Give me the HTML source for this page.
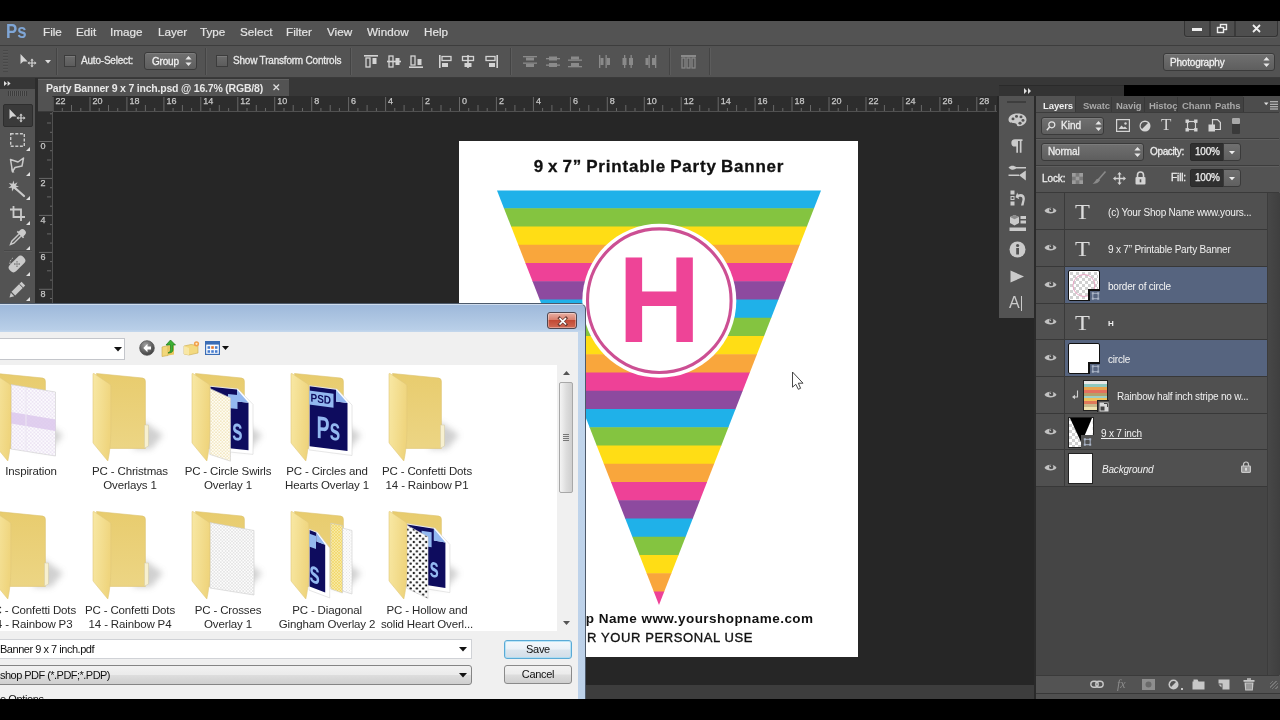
<!DOCTYPE html><html lang="en"><head><meta charset="utf-8"><title>Photoshop - Save As</title><style>
*{box-sizing:border-box;margin:0;padding:0}
html,body{width:1280px;height:720px;overflow:hidden;background:#000}
body{position:relative;font-family:"Liberation Sans",sans-serif;font-size:12px;color:#ddd}
.a{position:absolute}
.t{position:absolute;white-space:nowrap;line-height:1}
svg{position:absolute;overflow:visible}
#root{position:absolute;left:0;top:0;width:1280px;height:720px;overflow:hidden;will-change:transform}
</style></head><body><div id="root"><div class="a" style="left:0px;top:21px;width:1280px;height:678px;background:#262626;"></div><div class="a" style="left:0px;top:21px;width:1280px;height:25px;background:#535353;"></div><div class="t" style="left:6px;top:22px;font-size:19.5px;color:#7fa6d6;font-weight:bold;transform:scaleX(0.86);transform-origin:0 0">Ps</div><div class="t" style="left:43px;top:26px;font-size:11.7px;color:#e4e4e4;-webkit-text-stroke:0.2px #e4e4e4">File</div><div class="t" style="left:76px;top:26px;font-size:11.7px;color:#e4e4e4;-webkit-text-stroke:0.2px #e4e4e4">Edit</div><div class="t" style="left:110px;top:26px;font-size:11.7px;color:#e4e4e4;-webkit-text-stroke:0.2px #e4e4e4">Image</div><div class="t" style="left:158px;top:26px;font-size:11.7px;color:#e4e4e4;-webkit-text-stroke:0.2px #e4e4e4">Layer</div><div class="t" style="left:200px;top:26px;font-size:11.7px;color:#e4e4e4;-webkit-text-stroke:0.2px #e4e4e4">Type</div><div class="t" style="left:240px;top:26px;font-size:11.7px;color:#e4e4e4;-webkit-text-stroke:0.2px #e4e4e4">Select</div><div class="t" style="left:286px;top:26px;font-size:11.7px;color:#e4e4e4;-webkit-text-stroke:0.2px #e4e4e4">Filter</div><div class="t" style="left:327px;top:26px;font-size:11.7px;color:#e4e4e4;-webkit-text-stroke:0.2px #e4e4e4">View</div><div class="t" style="left:367px;top:26px;font-size:11.7px;color:#e4e4e4;-webkit-text-stroke:0.2px #e4e4e4">Window</div><div class="t" style="left:424px;top:26px;font-size:11.7px;color:#e4e4e4;-webkit-text-stroke:0.2px #e4e4e4">Help</div><div class="a" style="left:1184px;top:21px;width:94px;height:16px;background:#4e4e4e;border:1px solid #343434;border-top:none;border-radius:0 0 3px 3px;box-shadow:0 1px 0 #5e5e5e"></div><div class="a" style="left:1209px;top:21px;width:2px;height:15px;background:#3a3a3a;"></div><div class="a" style="left:1234px;top:21px;width:2px;height:15px;background:#3a3a3a;"></div><div class="a" style="left:1192px;top:28px;width:10px;height:3px;background:#eee;"></div><svg style="left:1216px;top:23px" width="14" height="11"><rect x="4.5" y="1.5" width="6" height="5" fill="none" stroke="#eee" stroke-width="1.4"/><rect x="1.5" y="4.5" width="6" height="5" fill="#4e4e4e" stroke="#eee" stroke-width="1.4"/></svg><svg style="left:1252px;top:24px" width="10" height="9"><path d="M1 1L8 8M8 1L1 8" stroke="#eee" stroke-width="1.8"/></svg><div class="a" style="left:0px;top:45px;width:1280px;height:1px;background:#3d3d3d;"></div><div class="a" style="left:0px;top:46px;width:1280px;height:31px;background:#535353;"></div><div class="a" style="left:0px;top:77px;width:1280px;height:1px;background:#3a3a3a;"></div>
<div class="a" style="left:3px;top:50px;width:5px;height:22px;background:repeating-linear-gradient(#484848 0 1px,#585858 1px 2px,#535353 2px 3px);"></div><svg style="left:20px;top:54px" width="18" height="14"><path d="M0.5 0L0.5 10L3.2 7.6L7.6 7.4Z" fill="#d6d6d6"/><path d="M12 4.5L10.3 6.5H11.4V8.4H9.5V7.3L7.5 9L9.5 10.7V9.6H11.4V11.5H10.3L12 13.5L13.7 11.5H12.6V9.6H14.5V10.7L16.5 9L14.5 7.3V8.4H12.6V6.5H13.7Z" fill="#d6d6d6"/></svg><svg style="left:45px;top:60px" width="6" height="4"><path d="M0 0H6L3 3.5Z" fill="#ddd"/></svg><div class="a" style="left:56px;top:48px;width:1px;height:27px;background:#444;"></div><div class="a" style="left:57px;top:48px;width:1px;height:27px;background:#5c5c5c;"></div><div class="a" style="left:64px;top:55px;width:12px;height:12px;background:linear-gradient(#6b6b6b,#5c5c5c);border:1px solid #3c3c3c;box-shadow:inset 0 1px 0 #7a7a7a"></div><div class="t" style="left:81px;top:56px;font-size:10px;color:#e8e8e8;-webkit-text-stroke:0.3px #e8e8e8;letter-spacing:-0.2px">Auto-Select:</div><div class="a" style="left:144px;top:52px;width:53px;height:18px;background:linear-gradient(#707070,#5e5e5e);border:1px solid #3a3a3a;border-radius:3px;box-shadow:inset 0 1px 0 #7c7c7c"></div><div class="t" style="left:152px;top:57px;font-size:10px;color:#f0f0f0;-webkit-text-stroke:0.3px #f0f0f0;letter-spacing:-0.2px">Group</div><svg style="left:185px;top:56px" width="7" height="10"><path d="M3.5 0L6.6 3.6H0.4Z M3.5 10L6.6 6.4H0.4Z" fill="#e6e6e6"/></svg><div class="a" style="left:205px;top:48px;width:1px;height:27px;background:#444;"></div><div class="a" style="left:206px;top:48px;width:1px;height:27px;background:#5c5c5c;"></div><div class="a" style="left:216px;top:55px;width:12px;height:12px;background:linear-gradient(#6b6b6b,#5c5c5c);border:1px solid #3c3c3c;box-shadow:inset 0 1px 0 #7a7a7a"></div><div class="t" style="left:233px;top:56px;font-size:10px;color:#e8e8e8;-webkit-text-stroke:0.3px #e8e8e8;letter-spacing:-0.2px">Show Transform Controls</div><div class="a" style="left:350px;top:48px;width:1px;height:27px;background:#444;"></div><div class="a" style="left:351px;top:48px;width:1px;height:27px;background:#5c5c5c;"></div><svg style="left:364px;top:55px" width="15" height="14"><rect x="0" y="0" width="14" height="1.6" fill="#d4d4d4"/><rect x="2" y="3" width="4" height="9" fill="none" stroke="#d4d4d4" stroke-width="1.3"/><rect x="8.5" y="3" width="4" height="6" fill="#d4d4d4"/></svg><svg style="left:387px;top:55px" width="15" height="14"><rect x="0" y="5.7" width="14" height="1.6" fill="#d4d4d4"/><rect x="2" y="1" width="4" height="11" fill="none" stroke="#d4d4d4" stroke-width="1.3"/><rect x="8.5" y="3" width="4" height="7" fill="#d4d4d4"/></svg><svg style="left:409px;top:55px" width="15" height="14"><rect x="0" y="11.4" width="14" height="1.6" fill="#d4d4d4"/><rect x="2" y="1" width="4" height="9" fill="none" stroke="#d4d4d4" stroke-width="1.3"/><rect x="8.5" y="4" width="4" height="6" fill="#d4d4d4"/></svg><svg style="left:439px;top:55px" width="15" height="14"><rect x="0" y="0" width="1.6" height="13" fill="#d4d4d4"/><rect x="3" y="1.5" width="9" height="4" fill="none" stroke="#d4d4d4" stroke-width="1.3"/><rect x="3" y="8" width="6" height="4" fill="#d4d4d4"/></svg><svg style="left:461px;top:55px" width="15" height="14"><rect x="6.2" y="0" width="1.6" height="13" fill="#d4d4d4"/><rect x="1.5" y="1.5" width="11" height="4" fill="none" stroke="#d4d4d4" stroke-width="1.3"/><rect x="3.5" y="8" width="7" height="4" fill="#d4d4d4"/></svg><svg style="left:484px;top:55px" width="15" height="14"><rect x="12.4" y="0" width="1.6" height="13" fill="#d4d4d4"/><rect x="2" y="1.5" width="9" height="4" fill="none" stroke="#d4d4d4" stroke-width="1.3"/><rect x="5" y="8" width="6" height="4" fill="#d4d4d4"/></svg><div class="a" style="left:510px;top:48px;width:1px;height:27px;background:#444;"></div><div class="a" style="left:511px;top:48px;width:1px;height:27px;background:#5c5c5c;"></div><svg style="left:523px;top:55px" width="15" height="14"><rect x="0" y="1" width="14" height="1.3" fill="#8a8a8a"/><rect x="3" y="2.5" width="8" height="3" fill="#8a8a8a"/><rect x="0" y="7.5" width="14" height="1.3" fill="#8a8a8a"/><rect x="3" y="9" width="8" height="3" fill="#8a8a8a"/></svg><svg style="left:546px;top:55px" width="15" height="14"><rect x="0" y="3" width="14" height="1.3" fill="#8a8a8a"/><rect x="3" y="1.5" width="8" height="4" fill="#8a8a8a"/><rect x="0" y="9.5" width="14" height="1.3" fill="#8a8a8a"/><rect x="3" y="8" width="8" height="4" fill="#8a8a8a"/></svg><svg style="left:568px;top:55px" width="15" height="14"><rect x="0" y="4.5" width="14" height="1.3" fill="#8a8a8a"/><rect x="3" y="1.5" width="8" height="3" fill="#8a8a8a"/><rect x="0" y="11" width="14" height="1.3" fill="#8a8a8a"/><rect x="3" y="8" width="8" height="3" fill="#8a8a8a"/></svg><svg style="left:598px;top:55px" width="15" height="14"><rect x="1" y="0" width="1.3" height="13" fill="#8a8a8a"/><rect x="2.5" y="3" width="3" height="7" fill="#8a8a8a"/><rect x="7.5" y="0" width="1.3" height="13" fill="#8a8a8a"/><rect x="9" y="3" width="3" height="7" fill="#8a8a8a"/></svg><svg style="left:621px;top:55px" width="15" height="14"><rect x="3" y="0" width="1.3" height="13" fill="#8a8a8a"/><rect x="1.5" y="3" width="4" height="7" fill="#8a8a8a"/><rect x="9.5" y="0" width="1.3" height="13" fill="#8a8a8a"/><rect x="8" y="3" width="4" height="7" fill="#8a8a8a"/></svg><svg style="left:644px;top:55px" width="15" height="14"><rect x="4.5" y="0" width="1.3" height="13" fill="#8a8a8a"/><rect x="1.5" y="3" width="3" height="7" fill="#8a8a8a"/><rect x="11" y="0" width="1.3" height="13" fill="#8a8a8a"/><rect x="8" y="3" width="3" height="7" fill="#8a8a8a"/></svg><div class="a" style="left:669px;top:48px;width:1px;height:27px;background:#444;"></div><div class="a" style="left:670px;top:48px;width:1px;height:27px;background:#5c5c5c;"></div><svg style="left:681px;top:55px" width="15" height="14"><rect x="0" y="0" width="15" height="2" fill="#8a8a8a"/><rect x="1" y="3" width="3" height="10" fill="none" stroke="#8a8a8a" stroke-width="1.2"/><rect x="6" y="3" width="3" height="10" fill="none" stroke="#8a8a8a" stroke-width="1.2"/><rect x="11" y="3" width="3" height="10" fill="none" stroke="#8a8a8a" stroke-width="1.2"/></svg><div class="a" style="left:709px;top:48px;width:1px;height:27px;background:#444;"></div><div class="a" style="left:710px;top:48px;width:1px;height:27px;background:#5c5c5c;"></div><div class="a" style="left:1163px;top:53px;width:112px;height:18px;background:linear-gradient(#707070,#5e5e5e);border:1px solid #3a3a3a;border-radius:3px;box-shadow:inset 0 1px 0 #7c7c7c"></div><div class="t" style="left:1170px;top:58px;font-size:10px;color:#f0f0f0;-webkit-text-stroke:0.3px #f0f0f0;letter-spacing:-0.2px">Photography</div><svg style="left:1263px;top:57px" width="7" height="10"><path d="M3.5 0L6.6 3.6H0.4Z M3.5 10L6.6 6.4H0.4Z" fill="#e6e6e6"/></svg>
<div class="a" style="left:0px;top:78px;width:1280px;height:18px;background:#373737;"></div><div class="a" style="left:0px;top:78px;width:35px;height:11px;background:#363636;"></div><svg style="left:4px;top:81px" width="8" height="5"><path d="M0 0L3 2.5L0 5Z M3.6 0L6.6 2.5L3.6 5Z" fill="#e0e0e0"/></svg><div class="a" style="left:38px;top:79px;width:251px;height:17px;background:#535353;border-top:1px solid #616161"></div><div class="t" style="left:46px;top:83px;font-size:10.5px;color:#e8e8e8;font-weight:bold;letter-spacing:-0.2px">Party Banner 9 x 7 inch.psd @ 16.7% (RGB/8)</div><svg style="left:273px;top:84px" width="7" height="7"><path d="M0.5 0.5L6 6M6 0.5L0.5 6" stroke="#ddd" stroke-width="1.3"/></svg>
<div class="a" style="left:38px;top:96px;width:959px;height:16px;background:#2d2d2d;"></div><div class="a" style="left:38px;top:111px;width:959px;height:1px;background:#505050;"></div><div class="a" style="left:38px;top:112px;width:15px;height:587px;background:#2d2d2d;"></div><div class="a" style="left:52px;top:112px;width:1px;height:587px;background:#505050;"></div><div class="a" style="left:38px;top:96px;width:15px;height:16px;background:#525252;border-right:1px solid #3a3a3a;border-bottom:1px solid #3a3a3a"></div><svg style="left:0;top:0" width="1280" height="720"><rect x="52.5" y="97" width="1" height="14" fill="#686868"/><text x="55.5" y="104.3" font-size="9" fill="#c8c8c8" stroke="#c8c8c8" stroke-width="0.25" font-family="Liberation Sans, sans-serif">22</text><rect x="61.8" y="108" width="1" height="3" fill="#686868"/><rect x="71.0" y="105" width="1" height="6" fill="#686868"/><rect x="80.3" y="108" width="1" height="3" fill="#686868"/><rect x="89.5" y="97" width="1" height="14" fill="#686868"/><text x="92.5" y="104.3" font-size="9" fill="#c8c8c8" stroke="#c8c8c8" stroke-width="0.25" font-family="Liberation Sans, sans-serif">20</text><rect x="98.7" y="108" width="1" height="3" fill="#686868"/><rect x="108.0" y="105" width="1" height="6" fill="#686868"/><rect x="117.2" y="108" width="1" height="3" fill="#686868"/><rect x="126.4" y="97" width="1" height="14" fill="#686868"/><text x="129.4" y="104.3" font-size="9" fill="#c8c8c8" stroke="#c8c8c8" stroke-width="0.25" font-family="Liberation Sans, sans-serif">18</text><rect x="135.7" y="108" width="1" height="3" fill="#686868"/><rect x="144.9" y="105" width="1" height="6" fill="#686868"/><rect x="154.2" y="108" width="1" height="3" fill="#686868"/><rect x="163.4" y="97" width="1" height="14" fill="#686868"/><text x="166.4" y="104.3" font-size="9" fill="#c8c8c8" stroke="#c8c8c8" stroke-width="0.25" font-family="Liberation Sans, sans-serif">16</text><rect x="172.6" y="108" width="1" height="3" fill="#686868"/><rect x="181.9" y="105" width="1" height="6" fill="#686868"/><rect x="191.1" y="108" width="1" height="3" fill="#686868"/><rect x="200.3" y="97" width="1" height="14" fill="#686868"/><text x="203.3" y="104.3" font-size="9" fill="#c8c8c8" stroke="#c8c8c8" stroke-width="0.25" font-family="Liberation Sans, sans-serif">14</text><rect x="209.6" y="108" width="1" height="3" fill="#686868"/><rect x="218.8" y="105" width="1" height="6" fill="#686868"/><rect x="228.1" y="108" width="1" height="3" fill="#686868"/><rect x="237.3" y="97" width="1" height="14" fill="#686868"/><text x="240.3" y="104.3" font-size="9" fill="#c8c8c8" stroke="#c8c8c8" stroke-width="0.25" font-family="Liberation Sans, sans-serif">12</text><rect x="246.5" y="108" width="1" height="3" fill="#686868"/><rect x="255.8" y="105" width="1" height="6" fill="#686868"/><rect x="265.0" y="108" width="1" height="3" fill="#686868"/><rect x="274.2" y="97" width="1" height="14" fill="#686868"/><text x="277.2" y="104.3" font-size="9" fill="#c8c8c8" stroke="#c8c8c8" stroke-width="0.25" font-family="Liberation Sans, sans-serif">10</text><rect x="283.5" y="108" width="1" height="3" fill="#686868"/><rect x="292.7" y="105" width="1" height="6" fill="#686868"/><rect x="302.0" y="108" width="1" height="3" fill="#686868"/><rect x="311.2" y="97" width="1" height="14" fill="#686868"/><text x="314.2" y="104.3" font-size="9" fill="#c8c8c8" stroke="#c8c8c8" stroke-width="0.25" font-family="Liberation Sans, sans-serif">8</text><rect x="320.4" y="108" width="1" height="3" fill="#686868"/><rect x="329.7" y="105" width="1" height="6" fill="#686868"/><rect x="338.9" y="108" width="1" height="3" fill="#686868"/><rect x="348.1" y="97" width="1" height="14" fill="#686868"/><text x="351.1" y="104.3" font-size="9" fill="#c8c8c8" stroke="#c8c8c8" stroke-width="0.25" font-family="Liberation Sans, sans-serif">6</text><rect x="357.4" y="108" width="1" height="3" fill="#686868"/><rect x="366.6" y="105" width="1" height="6" fill="#686868"/><rect x="375.9" y="108" width="1" height="3" fill="#686868"/><rect x="385.1" y="97" width="1" height="14" fill="#686868"/><text x="388.1" y="104.3" font-size="9" fill="#c8c8c8" stroke="#c8c8c8" stroke-width="0.25" font-family="Liberation Sans, sans-serif">4</text><rect x="394.3" y="108" width="1" height="3" fill="#686868"/><rect x="403.6" y="105" width="1" height="6" fill="#686868"/><rect x="412.8" y="108" width="1" height="3" fill="#686868"/><rect x="422.1" y="97" width="1" height="14" fill="#686868"/><text x="425.1" y="104.3" font-size="9" fill="#c8c8c8" stroke="#c8c8c8" stroke-width="0.25" font-family="Liberation Sans, sans-serif">2</text><rect x="431.3" y="108" width="1" height="3" fill="#686868"/><rect x="440.5" y="105" width="1" height="6" fill="#686868"/><rect x="449.8" y="108" width="1" height="3" fill="#686868"/><rect x="459.0" y="97" width="1" height="14" fill="#686868"/><text x="462.0" y="104.3" font-size="9" fill="#c8c8c8" stroke="#c8c8c8" stroke-width="0.25" font-family="Liberation Sans, sans-serif">0</text><rect x="468.2" y="108" width="1" height="3" fill="#686868"/><rect x="477.5" y="105" width="1" height="6" fill="#686868"/><rect x="486.7" y="108" width="1" height="3" fill="#686868"/><rect x="495.9" y="97" width="1" height="14" fill="#686868"/><text x="498.9" y="104.3" font-size="9" fill="#c8c8c8" stroke="#c8c8c8" stroke-width="0.25" font-family="Liberation Sans, sans-serif">2</text><rect x="505.2" y="108" width="1" height="3" fill="#686868"/><rect x="514.4" y="105" width="1" height="6" fill="#686868"/><rect x="523.7" y="108" width="1" height="3" fill="#686868"/><rect x="532.9" y="97" width="1" height="14" fill="#686868"/><text x="535.9" y="104.3" font-size="9" fill="#c8c8c8" stroke="#c8c8c8" stroke-width="0.25" font-family="Liberation Sans, sans-serif">4</text><rect x="542.1" y="108" width="1" height="3" fill="#686868"/><rect x="551.4" y="105" width="1" height="6" fill="#686868"/><rect x="560.6" y="108" width="1" height="3" fill="#686868"/><rect x="569.9" y="97" width="1" height="14" fill="#686868"/><text x="572.9" y="104.3" font-size="9" fill="#c8c8c8" stroke="#c8c8c8" stroke-width="0.25" font-family="Liberation Sans, sans-serif">6</text><rect x="579.1" y="108" width="1" height="3" fill="#686868"/><rect x="588.3" y="105" width="1" height="6" fill="#686868"/><rect x="597.6" y="108" width="1" height="3" fill="#686868"/><rect x="606.8" y="97" width="1" height="14" fill="#686868"/><text x="609.8" y="104.3" font-size="9" fill="#c8c8c8" stroke="#c8c8c8" stroke-width="0.25" font-family="Liberation Sans, sans-serif">8</text><rect x="616.0" y="108" width="1" height="3" fill="#686868"/><rect x="625.3" y="105" width="1" height="6" fill="#686868"/><rect x="634.5" y="108" width="1" height="3" fill="#686868"/><rect x="643.8" y="97" width="1" height="14" fill="#686868"/><text x="646.8" y="104.3" font-size="9" fill="#c8c8c8" stroke="#c8c8c8" stroke-width="0.25" font-family="Liberation Sans, sans-serif">10</text><rect x="653.0" y="108" width="1" height="3" fill="#686868"/><rect x="662.2" y="105" width="1" height="6" fill="#686868"/><rect x="671.5" y="108" width="1" height="3" fill="#686868"/><rect x="680.7" y="97" width="1" height="14" fill="#686868"/><text x="683.7" y="104.3" font-size="9" fill="#c8c8c8" stroke="#c8c8c8" stroke-width="0.25" font-family="Liberation Sans, sans-serif">12</text><rect x="689.9" y="108" width="1" height="3" fill="#686868"/><rect x="699.2" y="105" width="1" height="6" fill="#686868"/><rect x="708.4" y="108" width="1" height="3" fill="#686868"/><rect x="717.7" y="97" width="1" height="14" fill="#686868"/><text x="720.7" y="104.3" font-size="9" fill="#c8c8c8" stroke="#c8c8c8" stroke-width="0.25" font-family="Liberation Sans, sans-serif">14</text><rect x="726.9" y="108" width="1" height="3" fill="#686868"/><rect x="736.1" y="105" width="1" height="6" fill="#686868"/><rect x="745.4" y="108" width="1" height="3" fill="#686868"/><rect x="754.6" y="97" width="1" height="14" fill="#686868"/><text x="757.6" y="104.3" font-size="9" fill="#c8c8c8" stroke="#c8c8c8" stroke-width="0.25" font-family="Liberation Sans, sans-serif">16</text><rect x="763.8" y="108" width="1" height="3" fill="#686868"/><rect x="773.1" y="105" width="1" height="6" fill="#686868"/><rect x="782.3" y="108" width="1" height="3" fill="#686868"/><rect x="791.5" y="97" width="1" height="14" fill="#686868"/><text x="794.5" y="104.3" font-size="9" fill="#c8c8c8" stroke="#c8c8c8" stroke-width="0.25" font-family="Liberation Sans, sans-serif">18</text><rect x="800.8" y="108" width="1" height="3" fill="#686868"/><rect x="810.0" y="105" width="1" height="6" fill="#686868"/><rect x="819.3" y="108" width="1" height="3" fill="#686868"/><rect x="828.5" y="97" width="1" height="14" fill="#686868"/><text x="831.5" y="104.3" font-size="9" fill="#c8c8c8" stroke="#c8c8c8" stroke-width="0.25" font-family="Liberation Sans, sans-serif">20</text><rect x="837.7" y="108" width="1" height="3" fill="#686868"/><rect x="847.0" y="105" width="1" height="6" fill="#686868"/><rect x="856.2" y="108" width="1" height="3" fill="#686868"/><rect x="865.5" y="97" width="1" height="14" fill="#686868"/><text x="868.5" y="104.3" font-size="9" fill="#c8c8c8" stroke="#c8c8c8" stroke-width="0.25" font-family="Liberation Sans, sans-serif">22</text><rect x="874.7" y="108" width="1" height="3" fill="#686868"/><rect x="883.9" y="105" width="1" height="6" fill="#686868"/><rect x="893.2" y="108" width="1" height="3" fill="#686868"/><rect x="902.4" y="97" width="1" height="14" fill="#686868"/><text x="905.4" y="104.3" font-size="9" fill="#c8c8c8" stroke="#c8c8c8" stroke-width="0.25" font-family="Liberation Sans, sans-serif">24</text><rect x="911.6" y="108" width="1" height="3" fill="#686868"/><rect x="920.9" y="105" width="1" height="6" fill="#686868"/><rect x="930.1" y="108" width="1" height="3" fill="#686868"/><rect x="939.4" y="97" width="1" height="14" fill="#686868"/><text x="942.4" y="104.3" font-size="9" fill="#c8c8c8" stroke="#c8c8c8" stroke-width="0.25" font-family="Liberation Sans, sans-serif">26</text><rect x="948.6" y="108" width="1" height="3" fill="#686868"/><rect x="957.8" y="105" width="1" height="6" fill="#686868"/><rect x="967.1" y="108" width="1" height="3" fill="#686868"/><rect x="976.3" y="97" width="1" height="14" fill="#686868"/><text x="979.3" y="104.3" font-size="9" fill="#c8c8c8" stroke="#c8c8c8" stroke-width="0.25" font-family="Liberation Sans, sans-serif">28</text><rect x="985.5" y="108" width="1" height="3" fill="#686868"/><rect x="994.8" y="105" width="1" height="6" fill="#686868"/><rect x="50" y="113.3" width="2" height="1" fill="#686868"/><rect x="47" y="122.5" width="4" height="1" fill="#686868"/><rect x="50" y="131.8" width="2" height="1" fill="#686868"/><rect x="39" y="141.0" width="13" height="1" fill="#686868"/><text x="40.5" y="149.0" font-size="9" fill="#c8c8c8" stroke="#c8c8c8" stroke-width="0.25" font-family="Liberation Sans, sans-serif">0</text><rect x="50" y="150.2" width="2" height="1" fill="#686868"/><rect x="47" y="159.5" width="4" height="1" fill="#686868"/><rect x="50" y="168.7" width="2" height="1" fill="#686868"/><rect x="39" y="177.9" width="13" height="1" fill="#686868"/><text x="40.5" y="185.9" font-size="9" fill="#c8c8c8" stroke="#c8c8c8" stroke-width="0.25" font-family="Liberation Sans, sans-serif">2</text><rect x="50" y="187.2" width="2" height="1" fill="#686868"/><rect x="47" y="196.4" width="4" height="1" fill="#686868"/><rect x="50" y="205.7" width="2" height="1" fill="#686868"/><rect x="39" y="214.9" width="13" height="1" fill="#686868"/><text x="40.5" y="222.9" font-size="9" fill="#c8c8c8" stroke="#c8c8c8" stroke-width="0.25" font-family="Liberation Sans, sans-serif">4</text><rect x="50" y="224.1" width="2" height="1" fill="#686868"/><rect x="47" y="233.4" width="4" height="1" fill="#686868"/><rect x="50" y="242.6" width="2" height="1" fill="#686868"/><rect x="39" y="251.9" width="13" height="1" fill="#686868"/><text x="40.5" y="259.9" font-size="9" fill="#c8c8c8" stroke="#c8c8c8" stroke-width="0.25" font-family="Liberation Sans, sans-serif">6</text><rect x="50" y="261.1" width="2" height="1" fill="#686868"/><rect x="47" y="270.3" width="4" height="1" fill="#686868"/><rect x="50" y="279.6" width="2" height="1" fill="#686868"/><rect x="39" y="288.8" width="13" height="1" fill="#686868"/><text x="40.5" y="296.8" font-size="9" fill="#c8c8c8" stroke="#c8c8c8" stroke-width="0.25" font-family="Liberation Sans, sans-serif">8</text><rect x="50" y="298.0" width="2" height="1" fill="#686868"/></svg>
<div class="a" style="left:459px;top:141px;width:399px;height:516px;background:#fff;"></div><div class="a" style="left:53px;top:685px;width:981px;height:14px;background:#3d3d3d;"></div><svg style="left:0;top:0" width="1280" height="720"><clipPath id="tri"><path d="M497 190.4H821L659 605Z"/></clipPath><g clip-path="url(#tri)"><rect x="490" y="190.00" width="340" height="18.75" fill="#1fb1e9"/><rect x="490" y="208.25" width="340" height="18.75" fill="#84c440"/><rect x="490" y="226.50" width="340" height="18.75" fill="#ffdd15"/><rect x="490" y="244.75" width="340" height="18.75" fill="#f9a63c"/><rect x="490" y="263.00" width="340" height="18.75" fill="#ee4197"/><rect x="490" y="281.25" width="340" height="18.75" fill="#8d4a9f"/><rect x="490" y="299.50" width="340" height="18.75" fill="#1fb1e9"/><rect x="490" y="317.75" width="340" height="18.75" fill="#84c440"/><rect x="490" y="336.00" width="340" height="18.75" fill="#ffdd15"/><rect x="490" y="354.25" width="340" height="18.75" fill="#f9a63c"/><rect x="490" y="372.50" width="340" height="18.75" fill="#ee4197"/><rect x="490" y="390.75" width="340" height="18.75" fill="#8d4a9f"/><rect x="490" y="409.00" width="340" height="18.75" fill="#1fb1e9"/><rect x="490" y="427.25" width="340" height="18.75" fill="#84c440"/><rect x="490" y="445.50" width="340" height="18.75" fill="#ffdd15"/><rect x="490" y="463.75" width="340" height="18.75" fill="#f9a63c"/><rect x="490" y="482.00" width="340" height="18.75" fill="#ee4197"/><rect x="490" y="500.25" width="340" height="18.75" fill="#8d4a9f"/><rect x="490" y="518.50" width="340" height="18.75" fill="#1fb1e9"/><rect x="490" y="536.75" width="340" height="18.75" fill="#84c440"/><rect x="490" y="555.00" width="340" height="18.75" fill="#ffdd15"/><rect x="490" y="573.25" width="340" height="18.75" fill="#f9a63c"/><rect x="490" y="591.50" width="340" height="18.75" fill="#ee4197"/><rect x="490" y="609.75" width="340" height="18.75" fill="#8d4a9f"/></g><circle cx="659.3" cy="300.8" r="77" fill="#fff"/><circle cx="659.3" cy="300.7" r="71.8" fill="none" stroke="#cc4f93" stroke-width="3.1"/><text transform="translate(659.2 342) scale(0.985 1.05)" x="0" y="0" text-anchor="middle" font-size="116" font-weight="bold" fill="#ee4497" font-family="Liberation Sans, sans-serif">H</text><text x="659" y="172" text-anchor="middle" font-size="17" font-weight="bold" fill="#111" stroke="#111" stroke-width="0.3" letter-spacing="0.8" word-spacing="-1.4" font-family="Liberation Sans, sans-serif">9 x 7” Printable Party Banner</text><text x="813.5" y="623" text-anchor="end" font-size="13.5" font-weight="bold" fill="#111" letter-spacing="0.45" font-family="Liberation Sans, sans-serif">(c) Your Shop Name www.yourshopname.com</text><text x="753" y="642" text-anchor="end" font-size="13" fill="#111" stroke="#111" stroke-width="0.35" letter-spacing="0.6" font-family="Liberation Sans, sans-serif">FOR YOUR PERSONAL USE</text><path d="M792.5 372V387.2L795.8 384.3L798.3 389.3L800.6 388.3L798.3 383.2H803Z" fill="#fff" stroke="#333" stroke-width="0.9"/></svg>
<div class="a" style="left:0px;top:89px;width:35px;height:215px;background:#535353;"></div><div class="a" style="left:35px;top:78px;width:3px;height:226px;background:#2c2c2c;"></div><div class="a" style="left:8px;top:91px;width:19px;height:5px;background:repeating-linear-gradient(90deg,#3c3c3c 0 1px,#5e5e5e 1px 2px);"></div><div class="a" style="left:3px;top:104px;width:30px;height:23px;background:#3a3a3a;border:1px solid #2e2e2e;border-radius:2px"></div><svg style="left:9px;top:109px" width="18" height="14"><path d="M0.5 0L0.5 10L3.2 7.6L7.6 7.4Z" fill="#d4d4d4"/><path d="M12 4.5L10.3 6.5H11.4V8.4H9.5V7.3L7.5 9L9.5 10.7V9.6H11.4V11.5H10.3L12 13.5L13.7 11.5H12.6V9.6H14.5V10.7L16.5 9L14.5 7.3V8.4H12.6V6.5H13.7Z" fill="#d4d4d4"/></svg><svg style="left:10px;top:133px" width="15" height="14"><rect x="0.7" y="0.7" width="13.6" height="12.6" fill="none" stroke="#cacaca" stroke-width="1.4" stroke-dasharray="3 1.6"/></svg><svg style="left:26px;top:147px" width="4" height="4"><path d="M4 0V4H0Z" fill="#e0e0e0"/></svg><svg style="left:9px;top:157px" width="17" height="16"><path d="M1.5 2.5L9 5L14.5 1L13 9L6 10.5L3.5 14.5Z" fill="none" stroke="#cacaca" stroke-width="1.5" stroke-linejoin="round"/><path d="M2 10.5L5.5 15.5L3 15.5Z" fill="#cacaca"/></svg><svg style="left:26px;top:172px" width="4" height="4"><path d="M4 0V4H0Z" fill="#e0e0e0"/></svg><svg style="left:8px;top:180px" width="18" height="18"><path d="M6.5 7.5L16 16" stroke="#cacaca" stroke-width="2.2" stroke-linecap="round"/><path d="M5.5 0.5L6.3 4L9.5 2.2L7.8 5.4L11 6.5L7.6 7.4L8.8 10.8L5.9 8.4L4 11.5L3.8 7.8L0.3 8L3.2 5.7L0.8 3L4.4 3.8Z" fill="#cacaca"/></svg><svg style="left:26px;top:196px" width="4" height="4"><path d="M4 0V4H0Z" fill="#e0e0e0"/></svg><svg style="left:10px;top:206px" width="15" height="15"><path d="M3.5 0V11H15M0 3.5H11V15" fill="none" stroke="#cacaca" stroke-width="1.8"/></svg><svg style="left:26px;top:221px" width="4" height="4"><path d="M4 0V4H0Z" fill="#e0e0e0"/></svg><svg style="left:9px;top:229px" width="17" height="17"><path d="M11 1.2A2.6 2.6 0 0 1 15.8 6L13.5 8.2L8.8 3.5Z" fill="#cacaca"/><path d="M8.3 2.4L14.6 8.7" stroke="#cacaca" stroke-width="1.6"/><path d="M9.8 5.2L2.8 12.2L1.5 15.5L4.8 14.2L11.8 7.2" fill="none" stroke="#cacaca" stroke-width="1.4"/></svg><svg style="left:26px;top:246px" width="4" height="4"><path d="M4 0V4H0Z" fill="#e0e0e0"/></svg><div class="a" style="left:4px;top:250px;width:28px;height:1px;background:#484848;"></div><div class="a" style="left:4px;top:251px;width:28px;height:1px;background:#5a5a5a;"></div><svg style="left:8px;top:255px" width="18" height="18"><g transform="rotate(-45 9 9)"><rect x="-0.5" y="4.5" width="19" height="9" rx="4" fill="#cacaca"/><circle cx="7.5" cy="7.5" r="0.7" fill="#535353"/><circle cx="10.5" cy="7.5" r="0.7" fill="#535353"/><circle cx="7.5" cy="10.5" r="0.7" fill="#535353"/><circle cx="10.5" cy="10.5" r="0.7" fill="#535353"/><circle cx="9" cy="9" r="0.7" fill="#535353"/></g><path d="M2 9A6 6 0 0 1 5 3" fill="none" stroke="#cacaca" stroke-width="1" stroke-dasharray="1.5 1.2"/></svg><svg style="left:26px;top:272px" width="4" height="4"><path d="M4 0V4H0Z" fill="#e0e0e0"/></svg><svg style="left:9px;top:281px" width="17" height="17"><path d="M12.5 0.8L16.2 4.5L6.2 14.5L2.5 10.8Z" fill="#cacaca"/><path d="M1.8 11.8L5.2 15.2L0.5 16.5Z" fill="#cacaca"/><path d="M10.3 3L14 6.7" stroke="#535353" stroke-width="1"/></svg><svg style="left:26px;top:297px" width="4" height="4"><path d="M4 0V4H0Z" fill="#e0e0e0"/></svg>
<div class="a" style="left:999px;top:85px;width:125px;height:11px;background:#333;border-top:1px solid #2a2a2a"></div><div class="a" style="left:1124px;top:85px;width:156px;height:11px;background:#000;"></div><svg style="left:1024px;top:88px" width="8" height="6"><path d="M0 0L3 3L0 6Z M4 0L7 3L4 6Z" fill="#e0e0e0"/></svg><div class="a" style="left:997px;top:96px;width:2px;height:16px;background:#262626;"></div><div class="a" style="left:999px;top:96px;width:35px;height:222px;background:#535353;"></div><div class="a" style="left:1034px;top:96px;width:2px;height:603px;background:#2a2a2a;"></div><div class="a" style="left:1007px;top:101px;width:19px;height:2px;background:#3e3e3e;"></div><svg style="left:1007.5px;top:113px" width="19" height="15" viewBox="0 0 19 16.5" preserveAspectRatio="none"><path d="M9.5 0.5C15 0.5 18.5 3.5 18.5 7.5C18.5 11.5 15 14.5 10.5 14.5C8.5 14.5 9.2 12.2 7.8 11.6C6 10.9 0.5 12 0.5 7.5C0.5 3.5 4 0.5 9.5 0.5Z" fill="#cbcbcb"/><circle cx="5" cy="6.5" r="1.5" fill="#535353"/><circle cx="8.5" cy="3.8" r="1.5" fill="#535353"/><circle cx="13" cy="4.3" r="1.5" fill="#535353"/><circle cx="15" cy="8.2" r="1.5" fill="#535353"/><circle cx="12" cy="11.3" r="1.6" fill="#535353"/></svg><svg style="left:1010px;top:139px" width="13" height="14"><path d="M5 0.3H12.5V2H11.5V13.7H9.8V2H8V13.7H6.3V7.6H5A3.65 3.65 0 0 1 5 0.3Z" fill="#cbcbcb"/></svg><svg style="left:1008px;top:164px" width="19" height="17"><path d="M0.5 3.5C3 0.8 6.5 1.5 8 3H18V4.6H8C6.5 6.2 3 6.5 0.5 3.5Z" fill="#cbcbcb"/><path d="M0.5 10.5H11V12H0.5Z" fill="#cbcbcb"/><path d="M11 11.2L17.8 6.5V16.5Z" fill="#cbcbcb"/></svg><svg style="left:1010px;top:190px" width="17" height="17"><rect x="0.5" y="0.5" width="4" height="4" fill="#cbcbcb"/><rect x="1" y="6.5" width="3" height="3" fill="none" stroke="#cbcbcb" stroke-width="1"/><rect x="0.5" y="11.5" width="4" height="4" fill="#cbcbcb"/><path d="M8 4.5C13 2.5 16 6.5 14.5 11L13.5 15.5H11L12.3 10.5C13 7.5 11.5 6 8.5 7.2L9.3 9.3L5.5 7.3L7.2 2.5Z" fill="#cbcbcb"/></svg><svg style="left:1009px;top:214px" width="18" height="18"><path d="M5.5 1L10 3V9L5.5 11.5L1 9V3Z" fill="#cbcbcb"/><path d="M5.5 1L10 3L5.5 5.3L1 3Z" fill="#8a8a8a"/><rect x="11.5" y="2" width="5.5" height="3" fill="#cbcbcb"/><rect x="11.5" y="6.5" width="5.5" height="3" fill="#cbcbcb"/><rect x="0.5" y="13.5" width="16.5" height="3.5" fill="#cbcbcb"/></svg><svg style="left:1009px;top:241px" width="17" height="17"><circle cx="8.5" cy="8.5" r="8" fill="#cbcbcb"/><rect x="7.2" y="7" width="2.8" height="6.5" fill="#535353"/><circle cx="8.6" cy="4.5" r="1.6" fill="#535353"/></svg><svg style="left:1010px;top:270px" width="15" height="13"><path d="M0.5 0.5L14 6.5L0.5 12.5Z" fill="#cbcbcb"/></svg><div class="t" style="left:1009px;top:295px;font-size:16px;color:#cbcbcb;">A</div><div class="a" style="left:1021px;top:296px;width:1.4px;height:15px;background:#cbcbcb;"></div>
<div class="a" style="left:1036px;top:96px;width:244px;height:603px;background:#535353;"></div><div class="a" style="left:1036px;top:96px;width:243px;height:16px;background:#424242;"></div><div class="a" style="left:1036px;top:96px;width:40px;height:17px;background:#535353;border-right:1px solid #383838"></div><div class="a" style="left:1243px;top:96px;width:37px;height:16px;background:#4c4c4c;"></div><div class="a" style="left:1111px;top:97px;width:1px;height:15px;background:#383838;"></div><div class="a" style="left:1144px;top:97px;width:1px;height:15px;background:#383838;"></div><div class="a" style="left:1177px;top:97px;width:1px;height:15px;background:#383838;"></div><div class="a" style="left:1210px;top:97px;width:1px;height:15px;background:#383838;"></div><div class="a" style="left:1243px;top:97px;width:1px;height:15px;background:#383838;"></div><div class="t" style="left:1043px;top:101px;font-size:9.5px;color:#f0f0f0;font-weight:bold;letter-spacing:-0.1px">Layers</div><div class="t" style="left:1083px;top:101px;font-size:9.5px;color:#a8a8a8;font-weight:bold;letter-spacing:-0.1px">Swatc</div><div class="t" style="left:1116px;top:101px;font-size:9.5px;color:#a8a8a8;font-weight:bold;letter-spacing:-0.1px">Navig</div><div class="t" style="left:1149px;top:101px;font-size:9.5px;color:#a8a8a8;font-weight:bold;letter-spacing:-0.1px">Histo&#231;</div><div class="t" style="left:1182px;top:101px;font-size:9.5px;color:#a8a8a8;font-weight:bold;letter-spacing:-0.1px">Chann</div><div class="t" style="left:1215px;top:101px;font-size:9.5px;color:#a8a8a8;font-weight:bold;letter-spacing:-0.1px">Paths</div><svg style="left:1264px;top:101px" width="14" height="8"><path d="M0 1.5H4.5L2.2 4.3Z" fill="#ddd"/><path d="M6 0.8H14M6 3.3H14M6 5.8H14M6 8H14" stroke="#cfcfcf" stroke-width="1.1"/></svg><div class="a" style="left:1036px;top:112px;width:243px;height:1px;background:#3c3c3c;"></div><div class="a" style="left:1041px;top:117px;width:63px;height:18px;background:linear-gradient(#707070,#5e5e5e);border:1px solid #3a3a3a;border-radius:3px;box-shadow:inset 0 1px 0 #7c7c7c"></div><svg style="left:1046px;top:121px" width="10" height="10"><circle cx="5.8" cy="3.8" r="3" fill="none" stroke="#e4e4e4" stroke-width="1.2"/><path d="M3.6 6L0.8 9.2" stroke="#e4e4e4" stroke-width="1.4"/></svg><div class="t" style="left:1061px;top:121px;font-size:10px;color:#ececec;-webkit-text-stroke:0.3px #ececec">Kind</div><svg style="left:1095px;top:121px" width="7" height="10"><path d="M3.5 0L6.6 3.6H0.4Z M3.5 10L6.6 6.4H0.4Z" fill="#e6e6e6"/></svg><svg style="left:1116px;top:119px" width="14" height="13"><rect x="0.6" y="0.6" width="12.8" height="11.8" fill="none" stroke="#d4d4d4" stroke-width="1.2"/><path d="M2.5 10L5.5 6.5L7.5 8.5L9 7.5L11.5 10Z" fill="#d4d4d4"/><circle cx="9.5" cy="4.5" r="1.2" fill="#d4d4d4"/></svg><svg style="left:1139px;top:120px" width="12" height="12"><circle cx="6" cy="6" r="5.5" fill="#d4d4d4"/><path d="M6 2A4 4 0 0 0 3 9L9 3A4 4 0 0 0 6 2Z" fill="#535353"/></svg><div class="t" style="left:1161px;top:116px;font-size:17px;color:#d4d4d4;font-family:'Liberation Serif',serif">T</div><svg style="left:1185px;top:119px" width="13" height="13"><rect x="2.5" y="2.5" width="8" height="8" fill="none" stroke="#d4d4d4" stroke-width="1.2"/><rect x="0.5" y="0.5" width="3.4" height="3.4" fill="#d4d4d4"/><rect x="9.1" y="0.5" width="3.4" height="3.4" fill="#d4d4d4"/><rect x="0.5" y="9.1" width="3.4" height="3.4" fill="#d4d4d4"/><rect x="9.1" y="9.1" width="3.4" height="3.4" fill="#d4d4d4"/></svg><svg style="left:1208px;top:119px" width="13" height="13"><path d="M4.5 0.6H9.5L12.4 3.5V10.5H4.5Z" fill="none" stroke="#d4d4d4" stroke-width="1.2"/><rect x="0.5" y="5.5" width="6.5" height="7" fill="#d4d4d4"/></svg><div class="a" style="left:1232px;top:118px;width:8px;height:16px;background:#3a3a3a;border-radius:1px"></div><div class="a" style="left:1232px;top:118px;width:8px;height:6px;background:#a8a8a8;border-radius:1px"></div><div class="a" style="left:1036px;top:138px;width:243px;height:1px;background:#3c3c3c;"></div><div class="a" style="left:1036px;top:139px;width:243px;height:1px;background:#5e5e5e;"></div><div class="a" style="left:1041px;top:143px;width:103px;height:18px;background:linear-gradient(#707070,#5e5e5e);border:1px solid #3a3a3a;border-radius:3px;box-shadow:inset 0 1px 0 #7c7c7c"></div><div class="t" style="left:1048px;top:147px;font-size:10px;color:#ececec;-webkit-text-stroke:0.3px #ececec;letter-spacing:-0.1px">Normal</div><svg style="left:1134px;top:147px" width="7" height="10"><path d="M3.5 0L6.6 3.6H0.4Z M3.5 10L6.6 6.4H0.4Z" fill="#e6e6e6"/></svg><div class="t" style="left:1150px;top:147px;font-size:10px;color:#ececec;-webkit-text-stroke:0.3px #ececec;letter-spacing:-0.35px">Opacity:</div><div class="a" style="left:1190px;top:143px;width:34px;height:18px;background:#303030;border:1px solid #2a2a2a;border-radius:2px 0 0 2px"></div><div class="t" style="left:1195px;top:147px;font-size:10px;color:#f0f0f0;-webkit-text-stroke:0.25px #f0f0f0;letter-spacing:-0.2px">100%</div><div class="a" style="left:1223px;top:143px;width:18px;height:18px;background:linear-gradient(#707070,#606060);border:1px solid #3a3a3a;border-radius:0 3px 3px 0"></div><svg style="left:1229px;top:151px" width="6" height="4"><path d="M0 0H6L3 3.2Z" fill="#eee"/></svg><div class="a" style="left:1190px;top:169px;width:34px;height:18px;background:#303030;border:1px solid #2a2a2a;border-radius:2px 0 0 2px"></div><div class="t" style="left:1195px;top:173px;font-size:10px;color:#f0f0f0;-webkit-text-stroke:0.25px #f0f0f0;letter-spacing:-0.2px">100%</div><div class="a" style="left:1223px;top:169px;width:18px;height:18px;background:linear-gradient(#707070,#606060);border:1px solid #3a3a3a;border-radius:0 3px 3px 0"></div><svg style="left:1229px;top:177px" width="6" height="4"><path d="M0 0H6L3 3.2Z" fill="#eee"/></svg><div class="a" style="left:1036px;top:165px;width:243px;height:1px;background:#3c3c3c;"></div><div class="a" style="left:1036px;top:166px;width:243px;height:1px;background:#5e5e5e;"></div><div class="t" style="left:1042px;top:174px;font-size:10px;color:#ececec;-webkit-text-stroke:0.3px #ececec;letter-spacing:-0.1px">Lock:</div><svg style="left:1072px;top:173px" width="11" height="11"><rect width="11" height="11" fill="#7a7a7a"/><rect x="0" y="0" width="3.7" height="3.7" fill="#9c9c9c"/><rect x="7.3" y="0" width="3.7" height="3.7" fill="#9c9c9c"/><rect x="3.7" y="3.7" width="3.6" height="3.6" fill="#9c9c9c"/><rect x="0" y="7.3" width="3.7" height="3.7" fill="#9c9c9c"/><rect x="7.3" y="7.3" width="3.7" height="3.7" fill="#9c9c9c"/></svg><svg style="left:1092px;top:171px" width="15" height="14"><path d="M13.5 0.5L6.5 8.5" stroke="#8a8a8a" stroke-width="1.6"/><path d="M6.8 7.8L8 9.2C6.5 12 3 13 0.5 12.6C2.5 11.5 3.5 9.5 4.8 8Z" fill="#8a8a8a"/></svg><svg style="left:1113px;top:172px" width="13" height="13"><path d="M6.5 0L8.7 2.6H7.2V5.8H10.4V4.3L13 6.5L10.4 8.7V7.2H7.2V10.4H8.7L6.5 13L4.3 10.4H5.8V7.2H2.6V8.7L0 6.5L2.6 4.3V5.8H5.8V2.6H4.3Z" fill="#d4d4d4"/></svg><svg style="left:1135px;top:171px" width="11" height="14"><path d="M2.5 6V4A3 3 0 0 1 8.5 4V6" fill="none" stroke="#d4d4d4" stroke-width="1.6"/><rect x="0.5" y="6" width="10" height="7.5" rx="1" fill="#d4d4d4"/><rect x="4.7" y="8.3" width="1.6" height="3" fill="#535353"/></svg><div class="t" style="left:1171px;top:173px;font-size:10px;color:#ececec;-webkit-text-stroke:0.3px #ececec;letter-spacing:-0.1px">Fill:</div><div class="a" style="left:1036px;top:192px;width:243px;height:1px;background:#3a3a3a;"></div>
<div class="a" style="left:1036px;top:193px;width:231px;height:294px;background:#505050;"></div><div class="a" style="left:1036px;top:487px;width:231px;height:188px;background:#454545;"></div><div class="a" style="left:1267px;top:193px;width:13px;height:482px;background:linear-gradient(90deg,#474747,#3f3f3f);border-left:1px solid #3c3c3c"></div><div class="a" style="left:1036px;top:229px;width:231px;height:1px;background:#383838;"></div><svg style="left:1044px;top:206px" width="13" height="9"><path d="M0.5 4.8C2.5 0.8 10.5 0.8 12.5 4.8C10.5 8.3 2.5 8.3 0.5 4.8Z" fill="#c2c2c2"/><circle cx="7.2" cy="3.9" r="2.2" fill="#4a4a4a"/><circle cx="6.3" cy="3.2" r="0.8" fill="#c2c2c2"/></svg><div class="t" style="left:1075px;top:202px;font-size:20px;color:#dcdcdc;font-family:'Liberation Serif',serif;transform:scaleX(1.22);transform-origin:0 0">T</div><div class="t" style="left:1108px;top:208px;font-size:10px;color:#f0f0f0;letter-spacing:-0.2px">(c) Your Shop Name www.yours...</div><div class="a" style="left:1036px;top:266px;width:231px;height:1px;background:#383838;"></div><svg style="left:1044px;top:243px" width="13" height="9"><path d="M0.5 4.8C2.5 0.8 10.5 0.8 12.5 4.8C10.5 8.3 2.5 8.3 0.5 4.8Z" fill="#c2c2c2"/><circle cx="7.2" cy="3.9" r="2.2" fill="#4a4a4a"/><circle cx="6.3" cy="3.2" r="0.8" fill="#c2c2c2"/></svg><div class="t" style="left:1075px;top:239px;font-size:20px;color:#dcdcdc;font-family:'Liberation Serif',serif;transform:scaleX(1.22);transform-origin:0 0">T</div><div class="t" style="left:1108px;top:245px;font-size:10px;color:#f0f0f0;letter-spacing:-0.2px">9 x 7&#8221; Printable Party Banner</div><div class="a" style="left:1065px;top:267px;width:202px;height:37px;background:#56647f;"></div><div class="a" style="left:1036px;top:303px;width:231px;height:1px;background:#383838;"></div><svg style="left:1044px;top:280px" width="13" height="9"><path d="M0.5 4.8C2.5 0.8 10.5 0.8 12.5 4.8C10.5 8.3 2.5 8.3 0.5 4.8Z" fill="#c2c2c2"/><circle cx="7.2" cy="3.9" r="2.2" fill="#4a4a4a"/><circle cx="6.3" cy="3.2" r="0.8" fill="#c2c2c2"/></svg><div class="a" style="left:1068px;top:270px;width:32px;height:31px;background:#fff;border:1.5px solid #111;border-radius:2px"></div><svg style="left:1070px;top:272px" width="28" height="27"><defs><pattern id="ck1" width="6" height="6" patternUnits="userSpaceOnUse"><rect width="6" height="6" fill="#fff"/><rect width="3" height="3" fill="#d0d0d0"/><rect x="3" y="3" width="3" height="3" fill="#d0d0d0"/></pattern></defs><rect width="28" height="27" fill="url(#ck1)"/></svg><svg style="left:1070px;top:272px" width="28" height="27"><circle cx="14" cy="13.5" r="11" fill="none" stroke="#e9a5c5" stroke-width="1"/></svg><div class="a" style="left:1089px;top:290px;width:12px;height:12px;background:#56647f;"></div><div class="a" style="left:1088px;top:289px;width:1.5px;height:12px;background:#111;"></div><div class="a" style="left:1088px;top:289px;width:12px;height:1.5px;background:#111;"></div><svg style="left:1091px;top:291px" width="9" height="10"><rect x="0" y="0" width="9" height="10" fill="#56647f"/><rect x="1.8" y="2.3" width="5.4" height="5.4" fill="none" stroke="#aab4c6" stroke-width="1"/><rect x="0.8" y="1.3" width="2" height="2" fill="#aab4c6"/><rect x="6.2" y="1.3" width="2" height="2" fill="#aab4c6"/><rect x="0.8" y="6.7" width="2" height="2" fill="#aab4c6"/><rect x="6.2" y="6.7" width="2" height="2" fill="#aab4c6"/></svg><div class="t" style="left:1108px;top:282px;font-size:10px;color:#f4f4f4;letter-spacing:-0.2px">border of circle</div><div class="a" style="left:1036px;top:339px;width:231px;height:1px;background:#383838;"></div><svg style="left:1044px;top:317px" width="13" height="9"><path d="M0.5 4.8C2.5 0.8 10.5 0.8 12.5 4.8C10.5 8.3 2.5 8.3 0.5 4.8Z" fill="#c2c2c2"/><circle cx="7.2" cy="3.9" r="2.2" fill="#4a4a4a"/><circle cx="6.3" cy="3.2" r="0.8" fill="#c2c2c2"/></svg><div class="t" style="left:1075px;top:313px;font-size:20px;color:#dcdcdc;font-family:'Liberation Serif',serif;transform:scaleX(1.22);transform-origin:0 0">T</div><div class="t" style="left:1108px;top:320px;font-size:8px;color:#f0f0f0;font-weight:bold">H</div><div class="a" style="left:1065px;top:340px;width:202px;height:37px;background:#56647f;"></div><div class="a" style="left:1036px;top:376px;width:231px;height:1px;background:#383838;"></div><svg style="left:1044px;top:353px" width="13" height="9"><path d="M0.5 4.8C2.5 0.8 10.5 0.8 12.5 4.8C10.5 8.3 2.5 8.3 0.5 4.8Z" fill="#c2c2c2"/><circle cx="7.2" cy="3.9" r="2.2" fill="#4a4a4a"/><circle cx="6.3" cy="3.2" r="0.8" fill="#c2c2c2"/></svg><div class="a" style="left:1068px;top:343px;width:32px;height:31px;background:#fff;border:1.5px solid #111;border-radius:2px"></div><div class="a" style="left:1089px;top:363px;width:12px;height:12px;background:#56647f;"></div><div class="a" style="left:1088px;top:362px;width:1.5px;height:12px;background:#111;"></div><div class="a" style="left:1088px;top:362px;width:12px;height:1.5px;background:#111;"></div><svg style="left:1091px;top:364px" width="9" height="10"><rect x="0" y="0" width="9" height="10" fill="#56647f"/><rect x="1.8" y="2.3" width="5.4" height="5.4" fill="none" stroke="#aab4c6" stroke-width="1"/><rect x="0.8" y="1.3" width="2" height="2" fill="#aab4c6"/><rect x="6.2" y="1.3" width="2" height="2" fill="#aab4c6"/><rect x="0.8" y="6.7" width="2" height="2" fill="#aab4c6"/><rect x="6.2" y="6.7" width="2" height="2" fill="#aab4c6"/></svg><div class="t" style="left:1108px;top:355px;font-size:10px;color:#f4f4f4;letter-spacing:-0.2px">circle</div><div class="a" style="left:1036px;top:413px;width:231px;height:1px;background:#383838;"></div><svg style="left:1044px;top:390px" width="13" height="9"><path d="M0.5 4.8C2.5 0.8 10.5 0.8 12.5 4.8C10.5 8.3 2.5 8.3 0.5 4.8Z" fill="#c2c2c2"/><circle cx="7.2" cy="3.9" r="2.2" fill="#4a4a4a"/><circle cx="6.3" cy="3.2" r="0.8" fill="#c2c2c2"/></svg><svg style="left:1072px;top:390px" width="8" height="10"><path d="M5.5 0.5V7H1.5" fill="none" stroke="#d0d0d0" stroke-width="1.1"/><path d="M0 7L3 4.8V9.2Z" fill="#d0d0d0"/></svg><div class="a" style="left:1083px;top:380px;width:25px;height:31px;background:#fff;border:1px solid #222"></div><div class="a" style="left:1084px;top:381.0px;width:23px;height:3px;background:#e8e8e8;"></div><div class="a" style="left:1084px;top:383.9px;width:23px;height:3px;background:#8fc9c0;"></div><div class="a" style="left:1084px;top:386.8px;width:23px;height:3px;background:#e9a34e;"></div><div class="a" style="left:1084px;top:389.7px;width:23px;height:3px;background:#e4705e;"></div><div class="a" style="left:1084px;top:392.6px;width:23px;height:3px;background:#b6a06a;"></div><div class="a" style="left:1084px;top:395.5px;width:23px;height:3px;background:#9ccfc6;"></div><div class="a" style="left:1084px;top:398.4px;width:23px;height:3px;background:#f0c05a;"></div><div class="a" style="left:1084px;top:401.3px;width:23px;height:3px;background:#e07a5a;"></div><div class="a" style="left:1084px;top:404.2px;width:23px;height:3px;background:#c9b98a;"></div><div class="a" style="left:1084px;top:407.1px;width:23px;height:3px;background:#efe3b0;"></div><div class="a" style="left:1098px;top:401px;width:12px;height:12px;background:#505050;"></div><div class="a" style="left:1097px;top:400px;width:1.2px;height:12px;background:#222;"></div><div class="a" style="left:1097px;top:400px;width:12px;height:1.2px;background:#222;"></div><svg style="left:1099px;top:402px" width="10" height="10"><rect x="0.5" y="0.5" width="9" height="9" fill="#d8d8d8"/><rect x="1.5" y="4.5" width="4" height="4" fill="#444"/><path d="M5 1.5H8.5V5" fill="none" stroke="#444" stroke-width="1"/></svg><div class="t" style="left:1117px;top:392px;font-size:10px;color:#f0f0f0;letter-spacing:-0.2px">Rainbow half inch stripe no w...</div><div class="a" style="left:1036px;top:449px;width:231px;height:1px;background:#383838;"></div><svg style="left:1044px;top:427px" width="13" height="9"><path d="M0.5 4.8C2.5 0.8 10.5 0.8 12.5 4.8C10.5 8.3 2.5 8.3 0.5 4.8Z" fill="#c2c2c2"/><circle cx="7.2" cy="3.9" r="2.2" fill="#4a4a4a"/><circle cx="6.3" cy="3.2" r="0.8" fill="#c2c2c2"/></svg><div class="a" style="left:1068px;top:417px;width:26px;height:31px;background:#fff;border:1px solid #222"></div><svg style="left:1069px;top:418px" width="24" height="29"><defs><pattern id="ck2" width="6" height="6" patternUnits="userSpaceOnUse"><rect width="6" height="6" fill="#fff"/><rect width="3" height="3" fill="#d0d0d0"/><rect x="3" y="3" width="3" height="3" fill="#d0d0d0"/></pattern></defs><rect width="24" height="29" fill="url(#ck2)"/></svg><svg style="left:1069px;top:418px" width="24" height="29"><path d="M12 24L23.5 0V29H12Z" fill="#fff"/><path d="M1 0H23L12.5 25Z" fill="#000"/></svg><div class="a" style="left:1081px;top:435px;width:13px;height:13px;background:#505050;"></div><svg style="left:1083px;top:437px" width="9" height="10"><rect x="0" y="0" width="9" height="10" fill="#505050"/><rect x="1.8" y="2.3" width="5.4" height="5.4" fill="none" stroke="#aab4c6" stroke-width="1"/><rect x="0.8" y="1.3" width="2" height="2" fill="#aab4c6"/><rect x="6.2" y="1.3" width="2" height="2" fill="#aab4c6"/><rect x="0.8" y="6.7" width="2" height="2" fill="#aab4c6"/><rect x="6.2" y="6.7" width="2" height="2" fill="#aab4c6"/></svg><div class="t" style="left:1101px;top:429px;font-size:10px;color:#f0f0f0;letter-spacing:-0.2px;text-decoration:underline;padding-right:4px">9 x 7 inch</div><div class="a" style="left:1036px;top:486px;width:231px;height:1px;background:#383838;"></div><svg style="left:1044px;top:463px" width="13" height="9"><path d="M0.5 4.8C2.5 0.8 10.5 0.8 12.5 4.8C10.5 8.3 2.5 8.3 0.5 4.8Z" fill="#c2c2c2"/><circle cx="7.2" cy="3.9" r="2.2" fill="#4a4a4a"/><circle cx="6.3" cy="3.2" r="0.8" fill="#c2c2c2"/></svg><div class="a" style="left:1068px;top:453px;width:25px;height:31px;background:#fff;border:1px solid #222"></div><div class="t" style="left:1102px;top:465px;font-size:10px;color:#f0f0f0;font-style:italic;letter-spacing:-0.2px">Background</div><svg style="left:1241px;top:461px" width="10" height="12"><path d="M2.5 5V3.5A2.5 2.5 0 0 1 7.5 3.5V5" fill="none" stroke="#c8c8c8" stroke-width="1.2"/><rect x="0.6" y="5" width="8.8" height="6.4" rx="0.8" fill="#9a9a9a" stroke="#c8c8c8" stroke-width="1.2"/><rect x="4.2" y="6.8" width="1.6" height="2.8" fill="#e8e8e8"/></svg><div class="a" style="left:1064px;top:193px;width:1px;height:294px;background:#3a3a3a;"></div><div class="a" style="left:1036px;top:675px;width:243px;height:1px;background:#3a3a3a;"></div><div class="a" style="left:1036px;top:676px;width:243px;height:17px;background:#535353;"></div><div class="a" style="left:1036px;top:693px;width:244px;height:6px;background:#505050;border-top:1px solid #383838"></div><svg style="left:1090px;top:680px" width="14" height="9"><rect x="0.8" y="1.3" width="7.4" height="6" rx="3" fill="none" stroke="#c8c8c8" stroke-width="1.4"/><rect x="5.8" y="1.3" width="7.4" height="6" rx="3" fill="none" stroke="#c8c8c8" stroke-width="1.4"/></svg><div class="t" style="left:1117px;top:678px;font-size:12px;color:#8c8c8c;font-style:italic;font-family:'Liberation Serif',serif">fx</div><svg style="left:1142px;top:679px" width="13" height="11"><rect width="13" height="11" fill="#8e8e8e"/><circle cx="6.5" cy="5.5" r="3" fill="#6a6a6a"/></svg><svg style="left:1168px;top:679px" width="16" height="12"><circle cx="5.5" cy="5.5" r="5" fill="#c8c8c8"/><path d="M5.5 2A3.5 3.5 0 0 0 3 8L8 3A3.5 3.5 0 0 0 5.5 2Z" fill="#535353"/><rect x="13" y="9" width="2" height="2" fill="#c8c8c8"/></svg><svg style="left:1192px;top:679px" width="13" height="11"><path d="M0.5 2.5H1.5V0.5H5.5L6.5 2.5H12.5V10.5H0.5Z" fill="#c8c8c8"/></svg><svg style="left:1218px;top:679px" width="12" height="11"><path d="M0.5 0.5H11.5V10.5H4.5V4.5H0.5Z" fill="#c8c8c8"/><path d="M0.5 5.5H3.5V8.5Z" fill="#c8c8c8"/></svg><svg style="left:1243px;top:678px" width="12" height="13"><rect x="0.5" y="2" width="11" height="1.8" fill="#c8c8c8"/><rect x="4" y="0.3" width="4" height="1.5" fill="#c8c8c8"/><path d="M1.5 4.5H10.5L9.8 12.5H2.2Z" fill="#c8c8c8"/><path d="M4 5.5V11.5M6 5.5V11.5M8 5.5V11.5" stroke="#535353" stroke-width="0.8"/></svg><div class="a" style="left:1270px;top:681px;width:8px;height:8px;background:repeating-linear-gradient(135deg,#535353 0 1.5px,#777 1.5px 2.5px);"></div>
<div class="a" style="left:-10px;top:303px;width:596px;height:397px;overflow:hidden;border-radius:0 6px 0 0;border:1px solid #4d5a6b;background:linear-gradient(#9db8da 0,#b9cfe8 26px,#c2d6ec 27px,#bcd1e9 100%)"></div><div class="a" style="left:0px;top:304px;width:584px;height:1px;background:rgba(255,255,255,.5);"></div><div class="a" style="left:547px;top:312px;width:30px;height:17px;background:linear-gradient(#e8b0a4 0,#d9806e 45%,#c24a35 50%,#d06a54 100%);border:1px solid #4e4650;border-radius:3px;box-shadow:inset 0 0 0 1px rgba(255,255,255,.35)"></div><svg style="left:557.5px;top:316.5px" width="10" height="9"><path d="M1.5 1.2L8 7.5M8 1.2L1.5 7.5" stroke="#6a3a32" stroke-width="3" stroke-linecap="square"/><path d="M1.5 1.2L8 7.5M8 1.2L1.5 7.5" stroke="#fff" stroke-width="1.7"/></svg><div class="a" style="left:0px;top:332px;width:578px;height:367px;background:#f0f0f0;"></div><div class="a" style="left:-5px;top:338px;width:130px;height:22px;background:#fff;border:1px solid #c4c6cb"></div><svg style="left:114px;top:347px" width="8" height="5"><path d="M0 0H8L4 4.5Z" fill="#111"/></svg><svg style="left:139px;top:340px" width="16" height="16"><defs><radialGradient id="bkb" cx="0.4" cy="0.3" r="0.8"><stop offset="0" stop-color="#a0a0a0"/><stop offset="1" stop-color="#333"/></radialGradient></defs><circle cx="8" cy="8" r="7.3" fill="url(#bkb)" stroke="#555" stroke-width="0.8"/><path d="M8.5 3.8L4.3 8L8.5 12.2V9.5H12V6.5H8.5Z" fill="#fff"/></svg><svg style="left:161px;top:339px" width="16" height="18"><path d="M1 8L7 6.5V16.5L1 17.5Z" fill="#f2d77a" stroke="#c9a94a" stroke-width="0.6"/><path d="M7 6.5H13V15.5L7 16.5Z" fill="#e9c85f"/><path d="M9.5 1L14.5 6H12V11C12 13 10 14 7 14C9 13 9.5 12 9.5 10.5V6H5Z" fill="#3cb034" stroke="#1f7a1c" stroke-width="0.7"/></svg><svg style="left:183px;top:340px" width="17" height="16"><path d="M1 6L8 4.5L15 5.5V13L6 15L1 14Z" fill="#f3d97f" stroke="#cbab4e" stroke-width="0.6"/><path d="M1 6L6 8V15L1 14Z" fill="#f8e7a6"/><circle cx="13.5" cy="3.8" r="2.6" fill="#f2a04a"/><circle cx="13.5" cy="3.8" r="1.1" fill="#fde9c4"/></svg><svg style="left:205px;top:341px" width="15" height="14"><rect x="0.6" y="0.6" width="13.8" height="12.8" fill="#fff" stroke="#3b6db5" stroke-width="1.2"/><rect x="0.6" y="0.6" width="13.8" height="3" fill="#3b6db5"/><rect x="2.5" y="5.2" width="2.6" height="2.6" fill="#4a7fd0"/><rect x="6.2" y="5.2" width="2.6" height="2.6" fill="#e0752b"/><rect x="9.9" y="5.2" width="2.6" height="2.6" fill="#4a7fd0"/><rect x="2.5" y="9.2" width="2.6" height="2.6" fill="#4a7fd0"/><rect x="6.2" y="9.2" width="2.6" height="2.6" fill="#4a7fd0"/><rect x="9.9" y="9.2" width="2.6" height="2.6" fill="#4a7fd0"/></svg><svg style="left:222px;top:346px" width="7" height="4"><path d="M0 0H7L3.5 4Z" fill="#111"/></svg><div class="a" style="left:0px;top:365px;width:557px;height:266px;background:#fff;"></div><div class="a" style="left:557px;top:365px;width:19px;height:266px;background:#f0f0f0;"></div><svg style="left:562.5px;top:370.5px" width="7" height="4"><path d="M3.5 0L7 4H0Z" fill="#555"/></svg><svg style="left:562.5px;top:620.5px" width="7" height="4"><path d="M0 0H7L3.5 4Z" fill="#555"/></svg><div class="a" style="left:559px;top:382px;width:14px;height:111px;background:linear-gradient(90deg,#f4f4f4,#dcdcdc 55%,#cfcfcf);border:1px solid #a8a8a8;border-radius:2px"></div><div class="a" style="left:563px;top:434px;width:6px;height:1px;background:#777;"></div><div class="a" style="left:563px;top:436px;width:6px;height:1px;background:#777;"></div><div class="a" style="left:563px;top:438px;width:6px;height:1px;background:#777;"></div><div class="a" style="left:563px;top:440px;width:6px;height:1px;background:#777;"></div><div class="a" style="left:0;top:365px;width:558px;height:266px;overflow:hidden"><div class="a" style="left:0;top:-365px;width:600px;height:720px"><svg style="left:-6.7px;top:372.6px" width="90" height="92"><defs><linearGradient id="fl00" x1="0" x2="1" y1="0" y2="0.25"><stop offset="0" stop-color="#f8e8a4"/><stop offset="1" stop-color="#efd57e"/></linearGradient><linearGradient id="bk00" x1="0" x2="0" y1="0" y2="1"><stop offset="0" stop-color="#e8cc6e"/><stop offset="1" stop-color="#ecd584"/></linearGradient><filter id="bl00" x="-30%" y="-30%" width="160%" height="160%"><feGaussianBlur stdDeviation="3"/></filter></defs><path d="M50 48L70 62L58 76H40Z" fill="#8a8a8a" opacity="0.4" filter="url(#bl00)"/><path d="M3.5 0.5L49.5 5Q52.4 5.4 52.4 8.4V75.4H14Z" fill="url(#bk00)" stroke="#dcc36e" stroke-width="0.6"/><defs><pattern id="pp00" width="3.6" height="3.6" patternUnits="userSpaceOnUse"><rect width="3.6" height="3.6" fill="#fbfafd"/><circle cx="1.8" cy="1.8" r="0.90" fill="#e9dff1"/><circle cx="0" cy="0" r="0.90" fill="#e9dff1"/><circle cx="3.6" cy="0" r="0.90" fill="#e9dff1"/><circle cx="0" cy="3.6" r="0.90" fill="#e9dff1"/><circle cx="3.6" cy="3.6" r="0.90" fill="#e9dff1"/></pattern></defs><path d="M18 11.5L62.5 19V83L18 76Z" fill="url(#pp00)" stroke="#cdcdcd" stroke-width="0.6"/><path d="M18 39L62.5 46.5V58L18 50.5Z" fill="#dcc8ec" opacity="0.85"/><path d="M33 14V79" stroke="#ece6f2" stroke-width="1"/><path d="M0 1Q0 0 1 0.6L16.7 11Q17.9 11.9 17.9 13.5V58Q17.6 76 14.8 88L0.5 70.6Q0 70 0 69Z" fill="url(#fl00)" stroke="#e0c878" stroke-width="0.6"/></svg><svg style="left:92.6px;top:372.6px" width="90" height="92"><defs><linearGradient id="fl01" x1="0" x2="1" y1="0" y2="0.25"><stop offset="0" stop-color="#f8e8a4"/><stop offset="1" stop-color="#efd57e"/></linearGradient><linearGradient id="bk01" x1="0" x2="0" y1="0" y2="1"><stop offset="0" stop-color="#e8cc6e"/><stop offset="1" stop-color="#ecd584"/></linearGradient><filter id="bl01" x="-30%" y="-30%" width="160%" height="160%"><feGaussianBlur stdDeviation="3"/></filter></defs><path d="M50 48L70 62L58 76H40Z" fill="#8a8a8a" opacity="0.4" filter="url(#bl01)"/><path d="M3.5 0.5L49.5 5Q52.4 5.4 52.4 8.4V75.4H14Z" fill="url(#bk01)" stroke="#dcc36e" stroke-width="0.6"/><path d="M51.5 52H55.5V73L51.5 75.2Z" fill="#f7f0d0" stroke="#d2cba6" stroke-width="0.5"/><path d="M0 1Q0 0 1 0.6L16.7 11Q17.9 11.9 17.9 13.5V58Q17.6 76 14.8 88L0.5 70.6Q0 70 0 69Z" fill="url(#fl01)" stroke="#e0c878" stroke-width="0.6"/></svg><svg style="left:192.2px;top:372.6px" width="90" height="92"><defs><linearGradient id="fl02" x1="0" x2="1" y1="0" y2="0.25"><stop offset="0" stop-color="#f8e8a4"/><stop offset="1" stop-color="#efd57e"/></linearGradient><linearGradient id="bk02" x1="0" x2="0" y1="0" y2="1"><stop offset="0" stop-color="#e8cc6e"/><stop offset="1" stop-color="#ecd584"/></linearGradient><filter id="bl02" x="-30%" y="-30%" width="160%" height="160%"><feGaussianBlur stdDeviation="3"/></filter></defs><path d="M50 48L70 62L58 76H40Z" fill="#8a8a8a" opacity="0.4" filter="url(#bl02)"/><path d="M3.5 0.5L49.5 5Q52.4 5.4 52.4 8.4V75.4H14Z" fill="url(#bk02)" stroke="#dcc36e" stroke-width="0.6"/><g transform="matrix(1 0.1042 0 1 17.8 12.9)"><path d="M0 0H28.2L43.2 14.0V64.0H0Z" fill="#fff" stroke="#cfcfcf" stroke-width="0.5"/><path d="M0.6 0.8H27.2V12.7H38.7V60.2H0.6Z" fill="#0e0c5e"/><path d="M27.2 0.8L38.7 12.7H27.2Z" fill="#93b8f0"/><rect x="18.2" y="6.2" width="9.5" height="14" fill="#93b8f0"/><text transform="translate(22.2 51.5) scale(0.62 1)" font-size="31" font-weight="bold" fill="#93b8f0" font-family="Liberation Sans, sans-serif">s</text></g><defs><pattern id="pp02" width="3.2" height="3.2" patternUnits="userSpaceOnUse"><rect width="3.2" height="3.2" fill="#fffdf4"/><circle cx="1.6" cy="1.6" r="0.70" fill="#ead9a2"/><circle cx="0" cy="0" r="0.70" fill="#ead9a2"/><circle cx="3.2" cy="0" r="0.70" fill="#ead9a2"/><circle cx="0" cy="3.2" r="0.70" fill="#ead9a2"/><circle cx="3.2" cy="3.2" r="0.70" fill="#ead9a2"/></pattern></defs><path d="M17.8 15.4L38.5 25V88.2L17.8 81.4Z" fill="url(#pp02)" stroke="#cdcdcd" stroke-width="0.6"/><path d="M0 1Q0 0 1 0.6L16.7 11Q17.9 11.9 17.9 13.5V58Q17.6 76 14.8 88L0.5 70.6Q0 70 0 69Z" fill="url(#fl02)" stroke="#e0c878" stroke-width="0.6"/></svg><svg style="left:291px;top:372.6px" width="90" height="92"><defs><linearGradient id="fl03" x1="0" x2="1" y1="0" y2="0.25"><stop offset="0" stop-color="#f8e8a4"/><stop offset="1" stop-color="#efd57e"/></linearGradient><linearGradient id="bk03" x1="0" x2="0" y1="0" y2="1"><stop offset="0" stop-color="#e8cc6e"/><stop offset="1" stop-color="#ecd584"/></linearGradient><filter id="bl03" x="-30%" y="-30%" width="160%" height="160%"><feGaussianBlur stdDeviation="3"/></filter></defs><path d="M50 48L70 62L58 76H40Z" fill="#8a8a8a" opacity="0.4" filter="url(#bl03)"/><path d="M3.5 0.5L49.5 5Q52.4 5.4 52.4 8.4V75.4H14Z" fill="url(#bk03)" stroke="#dcc36e" stroke-width="0.6"/><g transform="matrix(1 0.1302 0 1 18 12.4)"><path d="M0 0H28.0L43.0 14.0V64.5H0Z" fill="#fff" stroke="#cfcfcf" stroke-width="0.5"/><path d="M0.6 0.8H27.0V12.7H38.5V60.7H0.6Z" fill="#0e0c5e"/><path d="M27.0 0.8L38.5 12.7H27.0Z" fill="#93b8f0"/><rect x="0.0" y="5.2" width="24.5" height="14" fill="#93b8f0"/><text x="1.5" y="16.0" font-size="11.5" font-weight="bold" fill="#0e0c5e" textLength="20.5" lengthAdjust="spacingAndGlyphs" font-family="Liberation Sans, sans-serif">PSD</text><text transform="translate(7.5 51.4) scale(0.62 1)" font-size="31.5" font-weight="bold" fill="#93b8f0" font-family="Liberation Sans, sans-serif">Ps</text></g><path d="M0 1Q0 0 1 0.6L16.7 11Q17.9 11.9 17.9 13.5V58Q17.6 76 14.8 88L0.5 70.6Q0 70 0 69Z" fill="url(#fl03)" stroke="#e0c878" stroke-width="0.6"/></svg><svg style="left:389.4px;top:372.6px" width="90" height="92"><defs><linearGradient id="fl04" x1="0" x2="1" y1="0" y2="0.25"><stop offset="0" stop-color="#f8e8a4"/><stop offset="1" stop-color="#efd57e"/></linearGradient><linearGradient id="bk04" x1="0" x2="0" y1="0" y2="1"><stop offset="0" stop-color="#e8cc6e"/><stop offset="1" stop-color="#ecd584"/></linearGradient><filter id="bl04" x="-30%" y="-30%" width="160%" height="160%"><feGaussianBlur stdDeviation="3"/></filter></defs><path d="M50 48L70 62L58 76H40Z" fill="#8a8a8a" opacity="0.4" filter="url(#bl04)"/><path d="M3.5 0.5L49.5 5Q52.4 5.4 52.4 8.4V75.4H14Z" fill="url(#bk04)" stroke="#dcc36e" stroke-width="0.6"/><path d="M51.5 52H55.5V73L51.5 75.2Z" fill="#f7f0d0" stroke="#d2cba6" stroke-width="0.5"/><path d="M0 1Q0 0 1 0.6L16.7 11Q17.9 11.9 17.9 13.5V58Q17.6 76 14.8 88L0.5 70.6Q0 70 0 69Z" fill="url(#fl04)" stroke="#e0c878" stroke-width="0.6"/></svg><svg style="left:-6.7px;top:510.8px" width="90" height="92"><defs><linearGradient id="fl10" x1="0" x2="1" y1="0" y2="0.25"><stop offset="0" stop-color="#f8e8a4"/><stop offset="1" stop-color="#efd57e"/></linearGradient><linearGradient id="bk10" x1="0" x2="0" y1="0" y2="1"><stop offset="0" stop-color="#e8cc6e"/><stop offset="1" stop-color="#ecd584"/></linearGradient><filter id="bl10" x="-30%" y="-30%" width="160%" height="160%"><feGaussianBlur stdDeviation="3"/></filter></defs><path d="M50 48L70 62L58 76H40Z" fill="#8a8a8a" opacity="0.4" filter="url(#bl10)"/><path d="M3.5 0.5L49.5 5Q52.4 5.4 52.4 8.4V75.4H14Z" fill="url(#bk10)" stroke="#dcc36e" stroke-width="0.6"/><path d="M51.5 52H55.5V73L51.5 75.2Z" fill="#f7f0d0" stroke="#d2cba6" stroke-width="0.5"/><path d="M0 1Q0 0 1 0.6L16.7 11Q17.9 11.9 17.9 13.5V58Q17.6 76 14.8 88L0.5 70.6Q0 70 0 69Z" fill="url(#fl10)" stroke="#e0c878" stroke-width="0.6"/></svg><svg style="left:92.6px;top:510.8px" width="90" height="92"><defs><linearGradient id="fl11" x1="0" x2="1" y1="0" y2="0.25"><stop offset="0" stop-color="#f8e8a4"/><stop offset="1" stop-color="#efd57e"/></linearGradient><linearGradient id="bk11" x1="0" x2="0" y1="0" y2="1"><stop offset="0" stop-color="#e8cc6e"/><stop offset="1" stop-color="#ecd584"/></linearGradient><filter id="bl11" x="-30%" y="-30%" width="160%" height="160%"><feGaussianBlur stdDeviation="3"/></filter></defs><path d="M50 48L70 62L58 76H40Z" fill="#8a8a8a" opacity="0.4" filter="url(#bl11)"/><path d="M3.5 0.5L49.5 5Q52.4 5.4 52.4 8.4V75.4H14Z" fill="url(#bk11)" stroke="#dcc36e" stroke-width="0.6"/><path d="M51.5 52H55.5V73L51.5 75.2Z" fill="#f7f0d0" stroke="#d2cba6" stroke-width="0.5"/><path d="M0 1Q0 0 1 0.6L16.7 11Q17.9 11.9 17.9 13.5V58Q17.6 76 14.8 88L0.5 70.6Q0 70 0 69Z" fill="url(#fl11)" stroke="#e0c878" stroke-width="0.6"/></svg><svg style="left:192.2px;top:510.8px" width="90" height="92"><defs><linearGradient id="fl12" x1="0" x2="1" y1="0" y2="0.25"><stop offset="0" stop-color="#f8e8a4"/><stop offset="1" stop-color="#efd57e"/></linearGradient><linearGradient id="bk12" x1="0" x2="0" y1="0" y2="1"><stop offset="0" stop-color="#e8cc6e"/><stop offset="1" stop-color="#ecd584"/></linearGradient><filter id="bl12" x="-30%" y="-30%" width="160%" height="160%"><feGaussianBlur stdDeviation="3"/></filter></defs><path d="M50 48L70 62L58 76H40Z" fill="#8a8a8a" opacity="0.4" filter="url(#bl12)"/><path d="M3.5 0.5L49.5 5Q52.4 5.4 52.4 8.4V75.4H14Z" fill="url(#bk12)" stroke="#dcc36e" stroke-width="0.6"/><defs><pattern id="pp12" width="3.2" height="3.2" patternUnits="userSpaceOnUse"><rect width="3.2" height="3.2" fill="#fdfdfd"/><circle cx="1.6" cy="1.6" r="0.80" fill="#dcdcdc"/><circle cx="0" cy="0" r="0.80" fill="#dcdcdc"/><circle cx="3.2" cy="0" r="0.80" fill="#dcdcdc"/><circle cx="0" cy="3.2" r="0.80" fill="#dcdcdc"/><circle cx="3.2" cy="3.2" r="0.80" fill="#dcdcdc"/></pattern></defs><path d="M18 11.5L62 19.5V84L18 77Z" fill="url(#pp12)" stroke="#cdcdcd" stroke-width="0.6"/><path d="M0 1Q0 0 1 0.6L16.7 11Q17.9 11.9 17.9 13.5V58Q17.6 76 14.8 88L0.5 70.6Q0 70 0 69Z" fill="url(#fl12)" stroke="#e0c878" stroke-width="0.6"/></svg><svg style="left:291px;top:510.8px" width="90" height="92"><defs><linearGradient id="fl13" x1="0" x2="1" y1="0" y2="0.25"><stop offset="0" stop-color="#f8e8a4"/><stop offset="1" stop-color="#efd57e"/></linearGradient><linearGradient id="bk13" x1="0" x2="0" y1="0" y2="1"><stop offset="0" stop-color="#e8cc6e"/><stop offset="1" stop-color="#ecd584"/></linearGradient><filter id="bl13" x="-30%" y="-30%" width="160%" height="160%"><feGaussianBlur stdDeviation="3"/></filter></defs><path d="M50 48L70 62L58 76H40Z" fill="#8a8a8a" opacity="0.4" filter="url(#bl13)"/><path d="M3.5 0.5L49.5 5Q52.4 5.4 52.4 8.4V75.4H14Z" fill="url(#bk13)" stroke="#dcc36e" stroke-width="0.6"/><defs><pattern id="ppw13" width="3" height="3" patternUnits="userSpaceOnUse"><rect width="3" height="3" fill="#fff"/><circle cx="1.5" cy="1.5" r="0.70" fill="#e6e6e6"/><circle cx="0" cy="0" r="0.70" fill="#e6e6e6"/><circle cx="3" cy="0" r="0.70" fill="#e6e6e6"/><circle cx="0" cy="3" r="0.70" fill="#e6e6e6"/><circle cx="3" cy="3" r="0.70" fill="#e6e6e6"/></pattern></defs><path d="M51.5 17L61 19.5V83L51.5 80Z" fill="url(#ppw13)" stroke="#cdcdcd" stroke-width="0.6"/><defs><pattern id="pp13" width="3" height="3" patternUnits="userSpaceOnUse"><rect width="3" height="3" fill="#fff6cf"/><circle cx="1.5" cy="1.5" r="1.00" fill="#f0d560"/><circle cx="0" cy="0" r="1.00" fill="#f0d560"/><circle cx="3" cy="0" r="1.00" fill="#f0d560"/><circle cx="0" cy="3" r="1.00" fill="#f0d560"/><circle cx="3" cy="3" r="1.00" fill="#f0d560"/></pattern></defs><path d="M39.8 12.2L51.5 14.5V82L39.8 78Z" fill="url(#pp13)" stroke="#cdcdcd" stroke-width="0.6"/><g transform="matrix(1 0.3768 0 1 18 18)"><path d="M0 0H8.5L20.7 11.2V61.1H0Z" fill="#fff" stroke="#cfcfcf" stroke-width="0.5"/><path d="M0.6 0.8H7.5V9.6H16.2V57.3H0.6Z" fill="#0e0c5e"/><path d="M7.5 0.8L16.2 9.6H7.5Z" fill="#93b8f0"/><rect x="0.0" y="4.4" width="7.0" height="13" fill="#93b8f0"/><text transform="translate(-12.5 52.2) scale(0.62 1)" font-size="31" font-weight="bold" fill="#93b8f0" font-family="Liberation Sans, sans-serif">Ps</text></g><path d="M0 1Q0 0 1 0.6L16.7 11Q17.9 11.9 17.9 13.5V58Q17.6 76 14.8 88L0.5 70.6Q0 70 0 69Z" fill="url(#fl13)" stroke="#e0c878" stroke-width="0.6"/></svg><svg style="left:389.4px;top:510.8px" width="90" height="92"><defs><linearGradient id="fl14" x1="0" x2="1" y1="0" y2="0.25"><stop offset="0" stop-color="#f8e8a4"/><stop offset="1" stop-color="#efd57e"/></linearGradient><linearGradient id="bk14" x1="0" x2="0" y1="0" y2="1"><stop offset="0" stop-color="#e8cc6e"/><stop offset="1" stop-color="#ecd584"/></linearGradient><filter id="bl14" x="-30%" y="-30%" width="160%" height="160%"><feGaussianBlur stdDeviation="3"/></filter></defs><path d="M50 48L70 62L58 76H40Z" fill="#8a8a8a" opacity="0.4" filter="url(#bl14)"/><path d="M3.5 0.5L49.5 5Q52.4 5.4 52.4 8.4V75.4H14Z" fill="url(#bk14)" stroke="#dcc36e" stroke-width="0.6"/><g transform="matrix(1 0.1617 0 1 17.6 12.5)"><path d="M0 0H28.3L43.3 14.0V62.1H0Z" fill="#fff" stroke="#cfcfcf" stroke-width="0.5"/><path d="M0.6 0.8H27.3V12.7H38.8V58.3H0.6Z" fill="#0e0c5e"/><path d="M27.3 0.8L38.8 12.7H27.3Z" fill="#93b8f0"/><rect x="15.0" y="4.7" width="10.0" height="15" fill="#93b8f0"/><text transform="translate(22.8 49.2) scale(0.6 1)" font-size="28" font-weight="bold" fill="#93b8f0" font-family="Liberation Sans, sans-serif">s</text></g><defs><pattern id="pp14" width="6.2" height="6.2" patternUnits="userSpaceOnUse"><rect width="6.2" height="6.2" fill="#fff"/><circle cx="3.1" cy="3.1" r="1.20" fill="#161616"/><circle cx="0" cy="0" r="1.20" fill="#161616"/><circle cx="6.2" cy="0" r="1.20" fill="#161616"/><circle cx="0" cy="6.2" r="1.20" fill="#161616"/><circle cx="6.2" cy="6.2" r="1.20" fill="#161616"/></pattern></defs><path d="M17.6 14.1L39 25.8V87.5L17.6 77.2Z" fill="url(#pp14)" stroke="#cdcdcd" stroke-width="0.6"/><path d="M0 1Q0 0 1 0.6L16.7 11Q17.9 11.9 17.9 13.5V58Q17.6 76 14.8 88L0.5 70.6Q0 70 0 69Z" fill="url(#fl14)" stroke="#e0c878" stroke-width="0.6"/></svg><div class="t" style="left:-29px;width:120px;text-align:center;top:466px;font-size:11.5px;color:#2a2a2a;letter-spacing:-0.15px">Inspiration</div><div class="t" style="left:70px;width:120px;text-align:center;top:466px;font-size:11.5px;color:#2a2a2a;letter-spacing:-0.15px">PC - Christmas</div><div class="t" style="left:70px;width:120px;text-align:center;top:480px;font-size:11.5px;color:#2a2a2a;letter-spacing:-0.15px">Overlays 1</div><div class="t" style="left:168px;width:120px;text-align:center;top:466px;font-size:11.5px;color:#2a2a2a;letter-spacing:-0.15px">PC - Circle Swirls</div><div class="t" style="left:168px;width:120px;text-align:center;top:480px;font-size:11.5px;color:#2a2a2a;letter-spacing:-0.15px">Overlay 1</div><div class="t" style="left:267px;width:120px;text-align:center;top:466px;font-size:11.5px;color:#2a2a2a;letter-spacing:-0.15px">PC - Circles and</div><div class="t" style="left:267px;width:120px;text-align:center;top:480px;font-size:11.5px;color:#2a2a2a;letter-spacing:-0.15px">Hearts Overlay 1</div><div class="t" style="left:367px;width:120px;text-align:center;top:466px;font-size:11.5px;color:#2a2a2a;letter-spacing:-0.15px">PC - Confetti Dots</div><div class="t" style="left:367px;width:120px;text-align:center;top:480px;font-size:11.5px;color:#2a2a2a;letter-spacing:-0.15px">14 - Rainbow P1</div><div class="t" style="left:-29px;width:120px;text-align:center;top:605px;font-size:11.5px;color:#2a2a2a;letter-spacing:-0.15px">PC - Confetti Dots</div><div class="t" style="left:-29px;width:120px;text-align:center;top:619px;font-size:11.5px;color:#2a2a2a;letter-spacing:-0.15px">14 - Rainbow P3</div><div class="t" style="left:70px;width:120px;text-align:center;top:605px;font-size:11.5px;color:#2a2a2a;letter-spacing:-0.15px">PC - Confetti Dots</div><div class="t" style="left:70px;width:120px;text-align:center;top:619px;font-size:11.5px;color:#2a2a2a;letter-spacing:-0.15px">14 - Rainbow P4</div><div class="t" style="left:168px;width:120px;text-align:center;top:605px;font-size:11.5px;color:#2a2a2a;letter-spacing:-0.15px">PC - Crosses</div><div class="t" style="left:168px;width:120px;text-align:center;top:619px;font-size:11.5px;color:#2a2a2a;letter-spacing:-0.15px">Overlay 1</div><div class="t" style="left:267px;width:120px;text-align:center;top:605px;font-size:11.5px;color:#2a2a2a;letter-spacing:-0.15px">PC - Diagonal</div><div class="t" style="left:267px;width:120px;text-align:center;top:619px;font-size:11.5px;color:#2a2a2a;letter-spacing:-0.15px">Gingham Overlay 2</div><div class="t" style="left:367px;width:120px;text-align:center;top:605px;font-size:11.5px;color:#2a2a2a;letter-spacing:-0.15px">PC - Hollow and</div><div class="t" style="left:367px;width:120px;text-align:center;top:619px;font-size:11.5px;color:#2a2a2a;letter-spacing:-0.15px">solid Heart Overl...</div></div></div><div class="a" style="left:-5px;top:639px;width:477px;height:20px;background:#fff;border:1px solid #d0d2d6"></div><div class="t" style="left:0px;top:644px;font-size:11px;color:#111;letter-spacing:-0.47px">Banner 9 x 7 inch.pdf</div><svg style="left:459px;top:647px" width="8" height="5"><path d="M0 0H8L4 4.5Z" fill="#111"/></svg><div class="a" style="left:-5px;top:665px;width:477px;height:20px;background:linear-gradient(#f2f2f2,#ebebeb 48%,#dddddd 52%,#cfcfcf);border:1px solid #858585;border-radius:3px"></div><div class="t" style="left:0px;top:670px;font-size:11px;color:#111;letter-spacing:-0.53px">shop PDF (*.PDF;*.PDP)</div><svg style="left:459px;top:673px" width="8" height="5"><path d="M0 0H8L4 4.5Z" fill="#111"/></svg><div class="a" style="left:0;top:690px;width:200px;height:9px;overflow:hidden"><div class="t" style="left:0;top:4px;font-size:11px;color:#111;letter-spacing:-0.4px">e Options</div></div><div class="a" style="left:504px;top:640px;width:68px;height:19px;background:linear-gradient(#f4f8fb,#eaf1f7 48%,#dde6ee 52%,#d2dde8);border:1px solid #5aaad6;border-radius:3px;box-shadow:inset 0 0 0 1px #9fdcf6aa"></div><div class="t" style="left:504px;width:68px;text-align:center;top:644px;font-size:11px;color:#111;letter-spacing:-0.3px">Save</div><div class="a" style="left:504px;top:665px;width:68px;height:19px;background:linear-gradient(#f2f2f2,#ebebeb 48%,#dddddd 52%,#cfcfcf);border:1px solid #8a8a8a;border-radius:3px"></div><div class="t" style="left:504px;width:68px;text-align:center;top:669px;font-size:11px;color:#111;letter-spacing:-0.3px">Cancel</div>
<div class="a" style="left:0px;top:0px;width:1280px;height:21px;background:#000;"></div>
<div class="a" style="left:0px;top:699px;width:1280px;height:21px;background:#000;"></div></div></body></html>
